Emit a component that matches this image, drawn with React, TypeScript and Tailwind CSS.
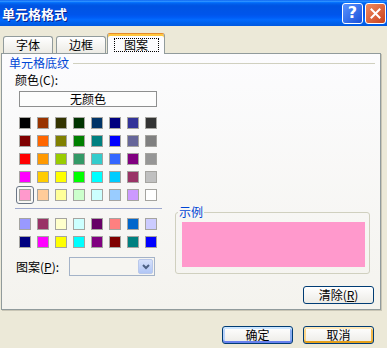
import React from 'react'

const font = { fontFamily: '"Noto Sans CJK SC", "Noto Sans", sans-serif' }

// Excel 调色板
const palette = [
  ['#000000', '#993300', '#333300', '#003300', '#003366', '#000080', '#333399', '#333333'],
  ['#800000', '#ff6600', '#808000', '#008000', '#008080', '#0000ff', '#666699', '#808080'],
  ['#ff0000', '#ff9900', '#99cc00', '#339966', '#33cccc', '#3366ff', '#800080', '#969696'],
  ['#ff00ff', '#ffcc00', '#ffff00', '#00ff00', '#00ffff', '#00ccff', '#993366', '#c0c0c0'],
  ['#ff99cc', '#ffcc99', '#ffff99', '#ccffcc', '#ccffff', '#99ccff', '#cc99ff', '#ffffff'],
]

const chartColors = [
  ['#9999ff', '#993366', '#ffffcc', '#ccffff', '#660066', '#ff8080', '#0066cc', '#ccccff'],
  ['#000080', '#ff00ff', '#ffff00', '#00ffff', '#800080', '#800000', '#008080', '#0000ff'],
]

function Swatch({ color, selected }: { color: string; selected?: boolean }) {
  return (
    <div className="relative w-[12px] h-[12px]">
      <div className="w-full h-full border border-[#a5a4a0]" style={{ backgroundColor: color }} />
      {selected && <div className="absolute -inset-[3px] rounded-[3px] border border-[#6b7686]" />}
    </div>
  )
}

function Grid({ rows, selected }: { rows: string[][]; selected?: string }) {
  return (
    <div className="grid grid-cols-8 gap-[6px] w-max">
      {rows.flat().map((c, i) => (
        <Swatch key={i} color={c} selected={i === 32 && selected === c} />
      ))}
    </div>
  )
}

function XpButton({ children, kind }: { children: React.ReactNode; kind?: 'default' | 'hot' }) {
  const ring =
    kind === 'default'
      ? 'shadow-[inset_0_2px_0_#cee7ff,inset_0_-2px_0_#6982ee,inset_2px_0_0_#b8d2fa,inset_-2px_0_0_#89adf0]'
      : kind === 'hot'
        ? 'shadow-[inset_0_2px_0_#ffe9b8,inset_0_-2px_0_#e5a01a,inset_2px_0_0_#fbd68a,inset_-2px_0_0_#f2b748]'
        : ''
  return (
    <div
      className={`w-[71px] h-[18px] flex items-center justify-center rounded-[3px] border border-[#003c74] bg-gradient-to-b from-[#ffffff] to-[#ecebe6] text-[12px] leading-none text-black ${ring}`}
    >
      {children}
    </div>
  )
}

export default function App() {
  return (
    <div className="w-[387px] h-[348px] bg-[#ece9d8] overflow-hidden flex flex-col" style={font}>
      {/* 标题栏 */}
      <div className="h-[26px] flex items-center pl-[2px] pr-[1px] bg-[linear-gradient(180deg,#0058ee_0%,#3593ff_4%,#288eff_6%,#127dff_8%,#036ffc_10%,#0262ee_14%,#0057e5_20%,#0054e3_24%,#0055eb_56%,#005bf5_66%,#026afe_76%,#0062ef_86%,#0058e0_100%)]">
        <span className="text-white font-bold text-[13px] leading-none [text-shadow:1px_1px_0_#0a1f8c]">单元格格式</span>
        <div className="ml-auto flex gap-[2px]">
          <div className="w-[21px] h-[21px] rounded-[3px] border border-white bg-gradient-to-br from-[#5a93ff] to-[#1a4fd8] flex items-center justify-center">
            <span className="text-white font-bold text-[16px] leading-none" style={{ fontFamily: '"DejaVu Sans", sans-serif' }}>?</span>
          </div>
          <div className="w-[21px] h-[21px] rounded-[3px] border border-white bg-gradient-to-br from-[#f08a5e] to-[#c9401b] flex items-center justify-center">
            <svg width="11" height="11" viewBox="0 0 11 11">
              <path d="M1.5 1.5 L9.5 9.5 M9.5 1.5 L1.5 9.5" stroke="white" strokeWidth="2" strokeLinecap="square" />
            </svg>
          </div>
        </div>
      </div>

      {/* 选项卡 */}
      <div className="mt-[7px] h-[21px] flex items-end pl-[3px] relative z-10">
        <div className="w-[50px] h-[17px] mb-[1px] rounded-t-[3px] border border-b-0 border-[#919b9c] bg-gradient-to-b from-[#ffffff] to-[#ecebe5] flex items-center justify-center text-[12px] leading-none">
          字体
        </div>
        <div className="ml-[3px] w-[50px] h-[17px] mb-[1px] rounded-t-[3px] border border-b-0 border-[#919b9c] bg-gradient-to-b from-[#ffffff] to-[#ecebe5] flex items-center justify-center text-[12px] leading-none">
          边框
        </div>
        <div className="ml-[1px] w-[58px] h-[21px] rounded-t-[3px] border border-b-0 border-[#919b9c] border-t-[#e68b2c] bg-[#fcfcfe] shadow-[inset_0_2px_0_#ffc73c] flex justify-center pt-[4px]">
          <div className="w-[45px] h-[14px] border border-dotted border-black flex items-center justify-center text-[12px] leading-none">
            图案
          </div>
        </div>
      </div>

      {/* 选项卡面板 */}
      <div className="-mt-[1px] ml-[1px] w-[380px] h-[257px] border border-[#919b9c] bg-gradient-to-b from-[#fcfcfe] to-[#f4f3ee] shadow-[1px_1px_0_#c9c6b6] flex flex-col text-[12px] text-black">
        {/* 单元格底纹 */}
        <div className="pt-[2px] pl-[7px] pr-[5px] flex items-center">
          <span className="text-[#0046d5] leading-[14px]">单元格底纹</span>
          <div className="flex-1 ml-[4px] h-px bg-[#d0d0bf]" />
        </div>

        <div className="flex">
          {/* 左侧 */}
          <div className="ml-[13px] w-[148px] flex flex-col">
            <div className="mt-[3px] leading-[13px]">颜色(C):</div>
            <div className="mt-[5px] ml-[4px] w-[138px] h-[16px] border border-[#8e8f8f] bg-[#fdfdfd] flex items-center justify-center leading-none">
              无颜色
            </div>
            <div className="mt-[10px] ml-[4px]">
              <Grid rows={palette} selected="#ff99cc" />
            </div>
            <div className="mt-[7px] w-[147px] h-px bg-[#9ea8cc]" />
            <div className="mt-[9px] ml-[4px]">
              <Grid rows={chartColors} />
            </div>
            <div className="mt-[9px] ml-[1px] flex items-center">
              <span className="w-[53px] leading-none">
                图案(<span className="underline">P</span>):
              </span>
              <div className="w-[86px] h-[19px] border border-[#a4b3c8] bg-[#f6f5f1] flex justify-end p-[1px]">
                <div className="w-[15px] h-full rounded-[2px] border border-[#b9c8ea] bg-gradient-to-b from-[#d6e1fc] to-[#b1c6f5] flex items-center justify-center">
                  <svg width="8" height="6" viewBox="0 0 8 6">
                    <path d="M1 1 L4 4 L7 1" fill="none" stroke="#4d6185" strokeWidth="2" />
                  </svg>
                </div>
              </div>
            </div>
          </div>

          {/* 右侧 */}
          <div className="ml-[12px] w-[200px] flex flex-col">
            <fieldset className="mt-[135px] w-[195px] rounded-[3px] border border-[#d0d0bf]">
              <legend className="ml-[2px] px-[1px] text-[#0046d5] leading-[14px]">示例</legend>
              <div className="mt-[3px] mb-[6px] ml-[6px] w-[183px] h-[45px] bg-[#ff99cc]" />
            </fieldset>
            <div className="mt-[12px] self-end mr-[1px]">
              <XpButton>
                清除(<span className="underline">R</span>)
              </XpButton>
            </div>
          </div>
        </div>
      </div>

      {/* 底部按钮 */}
      <div className="mt-[16px] flex justify-end gap-[10px] pr-[13px]">
        <XpButton kind="default">确定</XpButton>
        <XpButton kind="hot">取消</XpButton>
      </div>
    </div>
  )
}
